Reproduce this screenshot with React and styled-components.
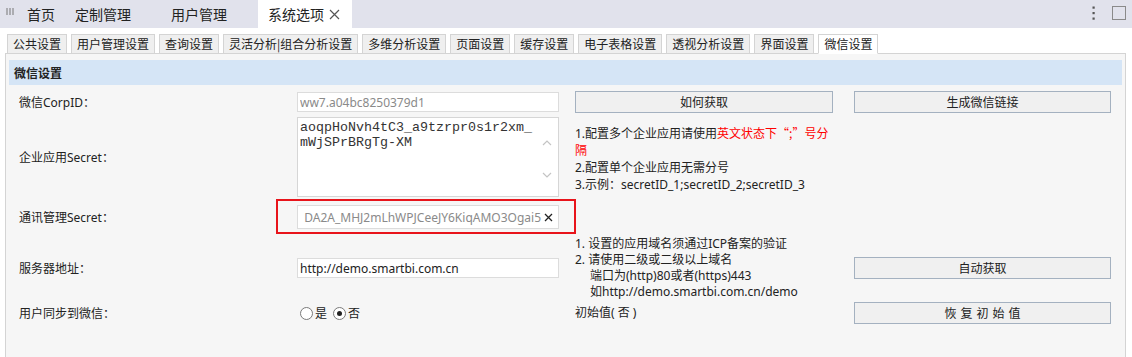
import React from "react";
import styled, { createGlobalStyle } from "styled-components";

const GlobalStyle = createGlobalStyle`
  html, body { margin: 0; padding: 0; background: #fff; }
  body {
    font-family: "Noto Sans", "Noto Sans CJK SC", sans-serif;
    font-size: 12px;
    color: #222;
  }
  * { box-sizing: border-box; }
`;

const CJK = `"Noto Sans CJK SC", "Noto Sans", sans-serif`;

const Page = styled.div`
  width: 1132px;
  height: 357px;
  overflow: hidden;
  background: #fff;
`;

const TopBar = styled.div`
  display: flex;
  height: 28px;
  background: #e1e2ec;
`;

const HandleCell = styled.div`
  width: 17px;
  padding: 3px 0 0 6px;
`;

const TopTab = styled.div`
  display: flex;
  align-items: center;
  padding: 0 ${(p) => p.$pr ?? 10}px 0 10px;
  margin-left: ${(p) => p.$ml || 0}px;
  font-family: ${CJK};
  font-size: 14px;
  color: #222;
  background: ${(p) => (p.$active ? "#fff" : "transparent")};
`;

const CloseIcon = styled.svg`
  margin-left: 5px;
`;

const TopActions = styled.div`
  margin-left: auto;
  display: flex;
  align-items: flex-start;
  gap: 17px;
  padding: 6px 6px 0 0;
`;

const MaxBox = styled.div`
  width: 14px;
  height: 14px;
  border: 1.5px solid #8a8a8a;
`;

const SubTabs = styled.div`
  display: flex;
  align-items: flex-end;
  gap: 4px;
  height: 25px;
  padding-left: 7px;
`;

const SubTab = styled.div`
  position: relative;
  z-index: 1;
  height: 20px;
  margin-bottom: -1px;
  padding: 0 5px;
  border: 1px solid #d4d4d4;
  border-bottom-color: ${(p) => (p.$active ? "#fff" : "#d4d4d4")};
  background: ${(p) => (p.$active ? "#fff" : "#efefef")};
  font-family: ${CJK};
  font-size: 12px;
  line-height: 18px;
  color: #222;
  white-space: nowrap;
`;

const Panel = styled.div`
  margin: 0 6px 0 5px;
  min-height: 320px;
  border: 1px solid #d4d4d4;
  background: #f6f6f6;
  padding: 6px 3px 0;
`;

const PanelHeader = styled.div`
  height: 25px;
  display: flex;
  align-items: center;
  padding-left: 5px;
  background: #d5e5f6;
  font-family: ${CJK};
  font-weight: bold;
  font-size: 12px;
  color: #222;
`;

const Form = styled.div`
  padding: 3px 0 0 10px;
`;

const Row = styled.div`
  display: grid;
  grid-template-columns: 278px 278px 279px 257px;
  height: ${(p) => p.$h}px;
  align-items: center;
`;

const Label = styled.div`
  font-size: 12px;
  color: #222;
`;

const TextInput = styled.input`
  width: 262px;
  height: 20px;
  padding: 0 2px;
  border: 1px solid #dcdcdc;
  background: #fff;
  font-family: inherit;
  font-size: 12px;
  color: ${(p) => (p.$muted ? "#8a8a8a" : "#222")};
  outline: none;
`;

const TextArea = styled.div`
  align-self: start;
  margin-top: 1px;
  width: 262px;
  height: 80px;
  display: flex;
  background: #fff;
  border: 1px solid #d6d6d6;
`;

const AreaText = styled.div`
  width: 238px;
  padding: 2px 0 0 2px;
  font-family: "Liberation Mono", monospace;
  font-size: 13.33px;
  line-height: 15px;
  word-break: break-all;
  color: #333;
`;

const ScrollTrack = styled.div`
  flex: 1;
  display: flex;
  flex-direction: column;
  align-items: center;
  justify-content: space-between;
  padding: 22px 0 18px;
`;

const Highlight = styled.div`
  position: relative;
  width: 262px;
`;

const RedFrame = styled.div`
  position: absolute;
  left: -21px;
  right: -17px;
  top: -6px;
  bottom: -5px;
  border: 2px solid #e8141b;
  pointer-events: none;
`;

const SecretBox = styled.div`
  width: 262px;
  height: 24px;
  display: flex;
  align-items: center;
  padding: 0 5px 0 2px;
  background: #fff;
  border: 1px solid #dcdcdc;
`;

const SecretText = styled.div`
  flex: 1;
  display: flex;
  justify-content: flex-end;
  white-space: nowrap;
  font-size: 12px;
  color: #8a8a8a;
`;

const ClearIcon = styled.svg`
  margin-left: 3px;
  flex: none;
`;

const Button = styled.button`
  width: ${(p) => p.$w}px;
  height: 22px;
  padding: 0 0 0 ${(p) => p.$ls || 0}px;
  background: #f0f0f0;
  border: 1px solid #a4b1c0;
  font-family: inherit;
  font-size: 12px;
  color: #222;
  letter-spacing: ${(p) => p.$ls || 0}px;
`;

const Desc = styled.div`
  align-self: ${(p) => (p.$top ? "start" : "center")};
  margin-top: ${(p) => p.$mt || 0}px;
  font-size: 12px;
  line-height: ${(p) => p.$lh}px;
  color: #222;
`;

const Line = styled.div`
  white-space: nowrap;
  padding-left: ${(p) => p.$indent || 0}px;
`;

const Red = styled.span`
  color: #f00;
`;

const Quote = styled.span`
  font-family: ${CJK};
`;

const RadioGroup = styled.div`
  display: flex;
  align-items: center;
  padding-left: 3px;
`;

const Radio = styled.span`
  width: 13px;
  height: 13px;
  border-radius: 50%;
  border: 1px solid #7a7a7a;
  background: #fff;
  display: inline-flex;
  align-items: center;
  justify-content: center;
  &::after {
    content: "";
    width: 5px;
    height: 5px;
    border-radius: 50%;
    background: ${(p) => (p.$checked ? "#222" : "transparent")};
  }
`;

const RadioText = styled.span`
  margin: 0 6px 0 2px;
  font-size: 12px;
`;

const Chevron = ({ up }) => (
  <svg width="10" height="6" viewBox="0 0 10 6">
    <polyline
      points={up ? "1,5 5,1 9,5" : "1,1 5,5 9,1"}
      fill="none"
      stroke="#c4c4c4"
      strokeWidth="1.2"
    />
  </svg>
);

const subTabs = [
  "公共设置",
  "用户管理设置",
  "查询设置",
  "灵活分析|组合分析设置",
  "多维分析设置",
  "页面设置",
  "缓存设置",
  "电子表格设置",
  "透视分析设置",
  "界面设置",
  "微信设置",
];

export default function App() {
  return (
    <Page>
      <GlobalStyle />
      <TopBar>
        <HandleCell>
          <svg width="8" height="9" viewBox="0 0 8 9">
            <path d="M1 1v7M4 1v7M7 1v7" stroke="#777" strokeWidth="1" />
          </svg>
        </HandleCell>
        <TopTab>首页</TopTab>
        <TopTab>定制管理</TopTab>
        <TopTab $ml={20}>用户管理</TopTab>
        <TopTab $ml={21} $pr={12} $active>
          系统选项
          <CloseIcon width="11" height="11" viewBox="0 0 11 11">
            <path d="M1 1L10 10M10 1L1 10" stroke="#555" strokeWidth="1.2" />
          </CloseIcon>
        </TopTab>
        <TopActions>
          <svg width="3" height="14" viewBox="0 0 3 14">
            <rect x="0.5" y="0.5" width="2.2" height="2.2" fill="#555" />
            <rect x="0.5" y="6" width="2.2" height="2.2" fill="#555" />
            <rect x="0.5" y="11.5" width="2.2" height="2.2" fill="#555" />
          </svg>
          <MaxBox />
        </TopActions>
      </TopBar>

      <SubTabs>
        {subTabs.map((t) => (
          <SubTab key={t} $active={t === "微信设置"}>
            {t}
          </SubTab>
        ))}
      </SubTabs>

      <Panel>
        <PanelHeader>微信设置</PanelHeader>
        <Form>
          <Row $h={28}>
            <Label>微信CorpID：</Label>
            <TextInput readOnly $muted defaultValue="ww7.a04bc8250379d1" />
            <Button $w={258}>如何获取</Button>
            <Button $w={257}>生成微信链接</Button>
          </Row>

          <Row $h={82}>
            <Label>企业应用Secret：</Label>
            <TextArea>
              <AreaText>aoqpHoNvh4tC3_a9tzrpr0s1r2xm_mWjSPrBRgTg-XM</AreaText>
              <ScrollTrack>
                <Chevron up />
                <Chevron />
              </ScrollTrack>
            </TextArea>
            <Desc $top $mt={8} $lh={17}>
              <Line>
                1.配置多个企业应用请使用
                <Red>
                  英文状态下<Quote>“;”</Quote>号分
                </Red>
              </Line>
              <Line>
                <Red>隔</Red>
              </Line>
              <Line>2.配置单个企业应用无需分号</Line>
              <Line>3.示例：secretID_1;secretID_2;secretID_3</Line>
            </Desc>
            <div />
          </Row>

          <Row $h={38}>
            <Label>通讯管理Secret：</Label>
            <Highlight>
              <SecretBox>
                <SecretText>DA2A_MHJ2mLhWPJCeeJY6KiqAMO3Ogai5</SecretText>
                <ClearIcon width="9" height="9" viewBox="0 0 9 9">
                  <path d="M1 1L8 8M8 1L1 8" stroke="#222" strokeWidth="1.3" />
                </ClearIcon>
              </SecretBox>
              <RedFrame />
            </Highlight>
            <div />
            <div />
          </Row>

          <Row $h={58}>
            <Label>服务器地址：</Label>
            <TextInput readOnly defaultValue="http://demo.smartbi.com.cn" />
            <Desc $lh={16}>
              <Line>1. 设置的应用域名须通过ICP备案的验证</Line>
              <Line>2. 请使用二级或二级以上域名</Line>
              <Line $indent={15}>端口为(http)80或者(https)443</Line>
              <Line $indent={15}>如http://demo.smartbi.com.cn/demo</Line>
            </Desc>
            <Button $w={257}>自动获取</Button>
          </Row>

          <Row $h={38}>
            <Label>用户同步到微信：</Label>
            <RadioGroup>
              <Radio />
              <RadioText>是</RadioText>
              <Radio $checked />
              <RadioText>否</RadioText>
            </RadioGroup>
            <Desc $lh={16}>初始值( 否 )</Desc>
            <Button $w={257} $ls={4}>
              恢复初始值
            </Button>
          </Row>
        </Form>
      </Panel>
    </Page>
  );
}
